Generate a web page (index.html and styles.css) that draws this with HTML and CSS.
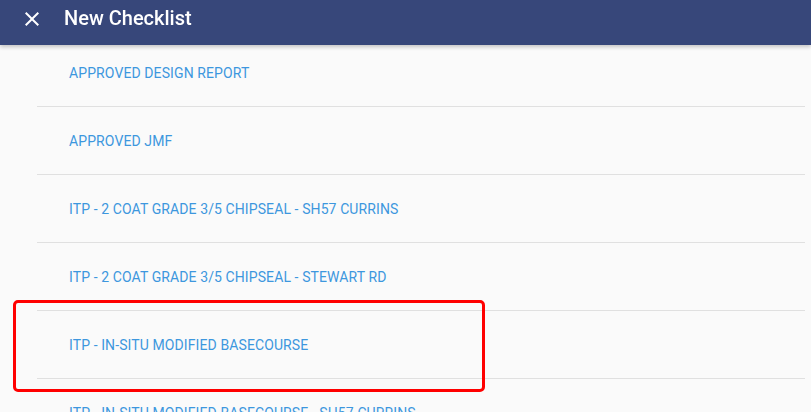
FILE: index.html
```html
<!DOCTYPE html>
<html>
<head>
<meta charset="utf-8">
<link rel="stylesheet" href="styles.css">
</head>
<body>
<header class="toolbar">
  <svg class="close" width="24" height="24" viewBox="0 0 24 24"><path fill="#fff" d="M19 6.41L17.59 5 12 10.59 6.41 5 5 6.41 10.59 12 5 17.59 6.41 19 12 13.41 17.59 19 19 17.59 13.41 12z"/></svg>
  <h1 class="title">New Checklist</h1>
</header>
<ul class="list">
  <li class="item">APPROVED DESIGN REPORT</li>
  <li class="item">APPROVED JMF</li>
  <li class="item">ITP - 2 COAT GRADE 3/5 CHIPSEAL - SH57 CURRINS</li>
  <li class="item">ITP - 2 COAT GRADE 3/5 CHIPSEAL - STEWART RD</li>
  <li class="item">ITP - IN-SITU MODIFIED BASECOURSE</li>
  <li class="item">ITP - IN-SITU MODIFIED BASECOURSE - SH57 CURRINS</li>
</ul>
<div class="highlight"></div>
</body>
</html>
```
FILE: styles.css
```css
html, body {
  margin: 0;
  padding: 0;
  background: #fafafa;
  font-family: Roboto, "Liberation Sans", sans-serif;
  overflow: hidden;
  height: 412px;
}
.toolbar {
  position: fixed;
  top: 0;
  left: 0;
  right: 0;
  height: 45px;
  background: #37477a;
  display: flex;
  align-items: center;
  padding-left: 20px;
  box-shadow: 0 2px 4px rgba(0,0,0,0.22);
  z-index: 2;
}
.close {
  display: block;
  margin-top: -8px;
}
.title {
  margin: 0 0 0 20px;
  color: #fff;
  font-size: 20px;
  font-weight: 500;
  margin-top: -9px;
}
.list {
  list-style: none;
  margin: 39px 6px 0 37px;
  padding: 0;
}
.item {
  height: 67px;
  border-bottom: 1px solid #e0e0e0;
  display: flex;
  align-items: center;
  padding-left: 32px;
  color: #3d97de;
  font-size: 14px;
  font-weight: 400;
  letter-spacing: 0.1px;
}
.highlight {
  position: absolute;
  left: 13px;
  top: 300px;
  width: 466px;
  height: 86px;
  border: 3px solid #ff0000;
  border-radius: 5px;
}
```
